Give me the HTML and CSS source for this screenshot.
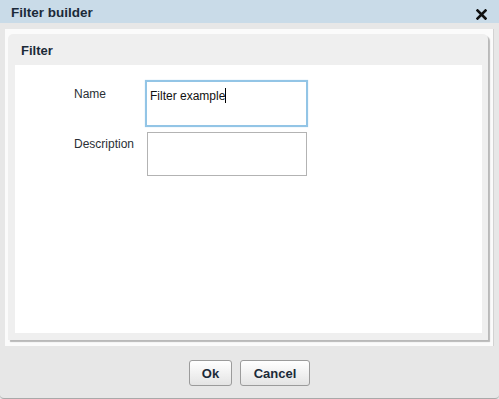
FILE: index.html
```html
<!DOCTYPE html>
<html>
<head>
<meta charset="utf-8">
<link rel="stylesheet" href="styles.css">
</head>
<body>
<div class="dialog">
  <div class="titlebar">
    <span class="title">Filter builder</span>
    <svg class="close" width="11" height="11" viewBox="0 0 11 11"><path d="M1.5 1.5 L9.5 9.5 M9.5 1.5 L1.5 9.5" stroke="#111" stroke-width="2.6" stroke-linecap="square"/></svg>
  </div>
  <div class="outer">
    <div class="fieldset">
      <div class="legend">Filter</div>
      <div class="content">
        <div class="form">
          <div class="label name-label">Name</div>
          <div class="input focused">Filter example<span class="caret"></span></div>
          <div class="label">Description</div>
          <div class="input textarea"></div>
        </div>
      </div>
    </div>
  </div>
  <div class="footer">
    <button class="btn ok">Ok</button>
    <button class="btn cancel">Cancel</button>
  </div>
</div>
</body>
</html>
```
FILE: styles.css
```css
html, body {
  margin: 0;
  padding: 0;
  background: #e7e7e7;
}
.dialog {
  width: 499px;
  height: 399px;
  box-sizing: border-box;
  background: #e7e7e7;
  font-family: "Liberation Sans", Arial, sans-serif;
  display: flex;
  flex-direction: column;
  border-bottom: 1px solid #a9a9a9;
  border-radius: 0 0 4px 4px;
  overflow: hidden;
}
.titlebar {
  height: 23px;
  box-sizing: border-box;
  background: #c9dbe8;
  padding: 5px 12px 0 11px;
  display: flex;
  justify-content: space-between;
  align-items: flex-start;
}
.title {
  font-size: 13.5px;
  line-height: 16px;
  font-weight: bold;
  color: #1b2a38;
}
.close {
  margin-top: 4px;
}
.outer {
  margin: 6px 5px 0 5px;
  background: #fbfbfb;
  padding: 5px 3px 6px 3px;
  border-right: 1px solid #d2d2d2;
}
.fieldset {
  background: #efefef;
  border-radius: 5px 5px 0 0;
  box-shadow: 2px 2px 1px #b9b9b9;
  margin-right: 2px;
}
.legend {
  height: 31px;
  box-sizing: border-box;
  padding: 9px 0 0 13px;
  font-size: 13px;
  line-height: 15px;
  font-weight: bold;
  color: #1b2a38;
}
.content {
  margin: 0 6px 0 7px;
  border-bottom: 7px solid #efefef;
}
.form {
  background: #fff;
  height: 268px;
  box-sizing: border-box;
  padding: 15px 0 0 59px;
  display: grid;
  grid-template-columns: 71px 163px;
  grid-auto-rows: min-content;
  row-gap: 5px;
  font-size: 12px;
  line-height: 14px;
  color: #222;
}
.label {
  padding-top: 5px;
  color: #2a2f35;
}
.name-label {
  padding-top: 7px;
}
.input {
  box-sizing: border-box;
  background: #fff;
}
.focused {
  width: 163px;
  height: 47px;
  border: 2px solid #93c5e6;
  box-shadow: 0 0 1px #b8d9ef;
  padding: 6px 3px;
  color: #111;
}
.caret {
  display: inline-block;
  width: 1px;
  height: 15px;
  background: #000;
  vertical-align: -3px;
}
.textarea {
  margin-left: 2px;
  width: 160px;
  height: 44px;
  border: 1px solid #b3b3b3;
}
.footer {
  flex: 1;
  display: flex;
  justify-content: center;
  align-items: flex-start;
  gap: 8px;
  padding-top: 14px;
}
.btn {
  height: 26px;
  margin: 0;
  padding: 0;
  border: 1px solid #9b9b9b;
  border-radius: 3px;
  background: linear-gradient(#ffffff, #e4e4e4);
  font-family: "Liberation Sans", Arial, sans-serif;
  font-size: 13px;
  font-weight: bold;
  color: #1b2a38;
}
.ok {
  width: 43px;
}
.cancel {
  width: 70px;
}
```
